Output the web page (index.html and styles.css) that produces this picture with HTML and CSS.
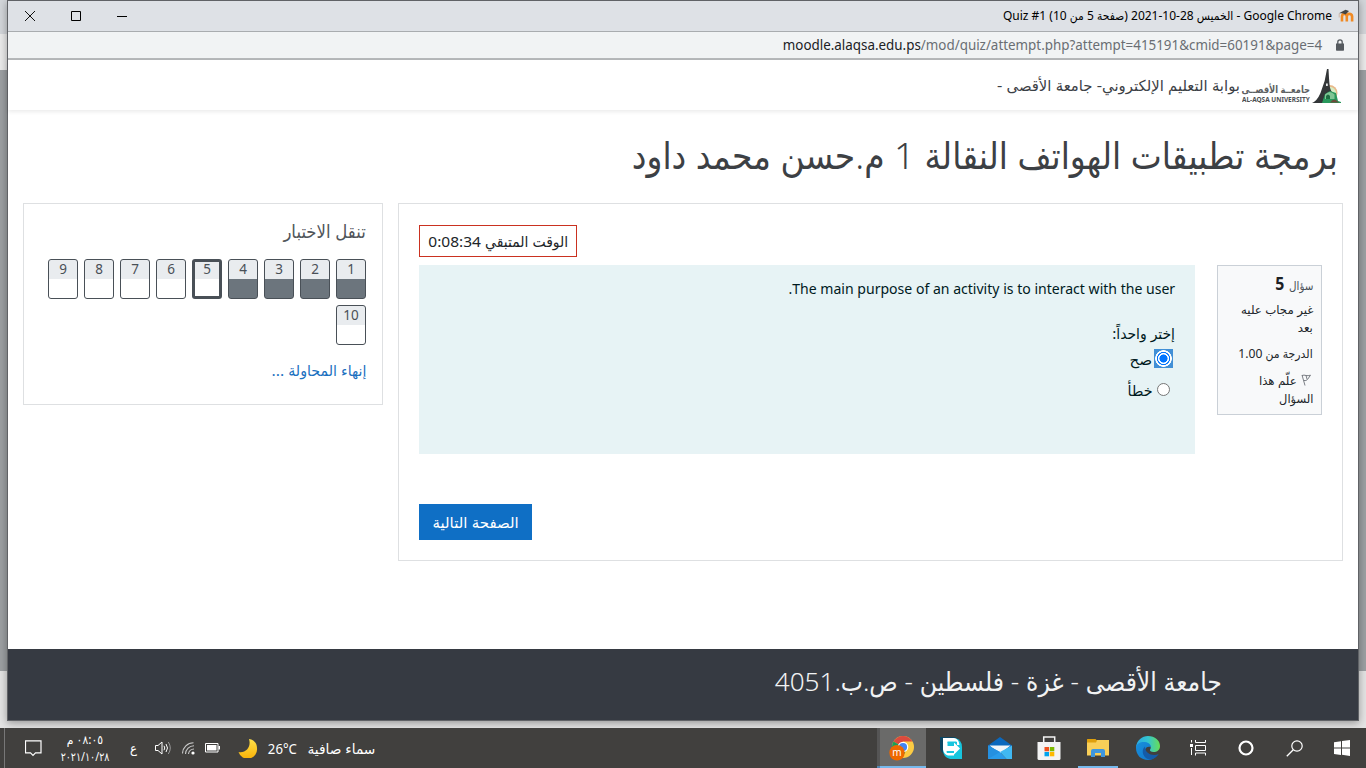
FILE: index.html
```
<!DOCTYPE html>
<html lang="ar" dir="rtl">
<head>
<meta charset="utf-8">
<title>Quiz #1</title>
<link rel="stylesheet" href="styles.css">
</head>
<body>
<div class="desktop">
  <div class="window">
    <div class="titlebar">
      <svg class="favicon" width="16" height="14" viewBox="0 0 16 14"><path d="M4 12.500V7.500q0-2.600 2.300-2.600t2.500 2.600v5M8.800 7.500q0-2.600 2.500-2.600t2.800 2.600v5" fill="none" stroke="#f08a24" stroke-width="2.600"/><path d="M1 4.200L7.500.800l3.500 1.200-3.500 3.600-3-1.300z" fill="#444"/><path d="M1.200 4.500v4" stroke="#c9a48a" stroke-width=".7"/></svg>
      <span class="t title-text" dir="ltr">Quiz #1 (<bdi dir="rtl">صفحة 5 من 10</bdi>) <bdi dir="ltr">2021-10-28</bdi> <bdi>الخميس</bdi> - Google Chrome</span>
      <div class="controls">
        <svg width="12" height="12"><path d="M1 6.500h10" stroke="#000"/></svg>
        <svg width="12" height="12"><path d="M1.500 1.500h9v9h-9z" fill="none" stroke="#000"/></svg>
        <svg width="12" height="12"><path d="M1 1l10 10M11 1L1 11" stroke="#111"/></svg>
      </div>
    </div>
    <div class="urlbar">
      <svg class="lock" width="8" height="12" viewBox="0 0 8 12"><path d="M0 4.500h8V11q0 .7-.7.7H.7Q0 11.700 0 11z" fill="#555a5f"/><path d="M1.800 5V3a2.200 2.200 0 014.400 0v2" fill="none" stroke="#555a5f" stroke-width="1.300"/></svg>
      <span class="t url" dir="ltr"><span class="host">moodle.alaqsa.edu.ps</span>/mod/quiz/attempt.php?attempt=415191&amp;cmid=60191&amp;page=4</span>
    </div>
    <header class="site-header">
      <svg class="emblem" width="29" height="35" viewBox="0 0 29 35"><circle cx="17.500" cy="24" r="8" fill="#e8b98a"/><circle cx="17.500" cy="24.500" r="6.700" fill="#d6ecc4"/><path d="M15 0h1.500q.5 10 1 15 .5 6 2.500 8-3-1-6 3-2 3-3 8H0q5-2 8.500-10Q13.500 12 15 0z" fill="#333638"/><path d="M14 14.500h1.800v2.500H14z" fill="#e4e6e7"/><path d="M10 34l3-9 5-3 6 2 2 8 3 1v1z" fill="#28985c"/><path d="M13 25.500q5-5 9.500 0V30H13z" fill="#7fc594"/><path d="M14 30v-3q2-3 4 0v3z" fill="#1f6d42"/><path d="M18 33.500q2-3 5-3l4 3z" fill="#6b4a3a"/></svg>
      <div class="logo-words"><span class="t logo-ar">جامعــة الأقصــى</span><span class="t logo-en" dir="ltr">AL-AQSA UNIVERSITY</span></div>
      <span class="t site-name">بوابة التعليم الإلكتروني- جامعة الأقصى -</span>
    </header>
    <div class="page">
      <h1 class="course"><span class="t">برمجة تطبيقات الهواتف النقالة 1 م.حسن محمد داود</span></h1>
      <div class="columns">
        <main class="card quiz">
          <div class="timer"><span class="t">الوقت المتبقي 0:08:34</span></div>
          <div class="question">
            <aside class="info">
              <div class="qno"><span class="t">سؤال</span> <b class="t">5</b></div>
              <div class="state"><span class="t w109">غير مجاب عليه</span><br><span class="t w109">بعد</span></div>
              <div class="grade"><span class="t">الدرجة من 1.00</span></div>
              <div class="flag"><svg width="10" height="12" viewBox="0 0 10 12"><path d="M1 1l3 10.500M1 1.500q2-.8 4 0 2 .5 4.500-.3L6.500 5.500Q5 7 3 6.500M5 1.500L6 5" fill="none" stroke="#6d7278" stroke-width=".9"/></svg><span class="t w109">علّم هذا</span><br><span class="t w106">السؤال</span></div>
            </aside>
            <section class="body">
              <p class="stem"><span class="t">The main purpose of an activity is to interact with the user.</span></p>
              <div class="prompt"><span class="t">إختر واحداً:</span></div>
              <label class="answer"><i class="radio on"></i><span class="t w112">صح</span></label>
              <label class="answer"><i class="radio"></i><span class="t w106">خطأ</span></label>
            </section>
          </div>
          <div class="next"><span class="t">الصفحة التالية</span></div>
        </main>
        <nav class="card side">
          <h2><span class="t">تنقل الاختبار</span></h2>
          <div class="pages">
            <a class="pg done">1</a><a class="pg done">2</a><a class="pg done">3</a><a class="pg done">4</a><a class="pg now">5</a><a class="pg">6</a><a class="pg">7</a><a class="pg">8</a><a class="pg">9</a><a class="pg">10</a>
          </div>
          <div class="finish"><span class="t">إنهاء المحاولة ...</span></div>
        </nav>
      </div>
    </div>
    <footer class="footer"><span class="t">جامعة الأقصى - غزة - فلسطين - ص.ب.4051</span></footer>
  </div>
  <div class="taskbar">
    <div class="app"><svg width="16" height="16" viewBox="0 0 16 16"><path d="M0 2.200L7 1.200v6.400H0zM8 1.100L16 0v7.600H8zM0 8.600h7v6.300l-7-1zM8 8.600h8V16l-8-1.200z" fill="#fff"/></svg></div>
    <div class="app"><svg width="17" height="17" viewBox="0 0 17 17"><circle cx="11" cy="6" r="5.200" fill="none" stroke="#fff" stroke-width="1.200"/><path d="M7.300 9.700L.8 16.200" stroke="#fff" stroke-width="1.300"/></svg></div>
    <div class="app"><svg width="16" height="16" viewBox="0 0 16 16"><circle cx="8" cy="8" r="6.500" fill="none" stroke="#fff" stroke-width="2.200"/></svg></div>
    <div class="app"><svg width="17" height="16" viewBox="0 0 17 16"><path d="M1.500 0v2.500M1.500 8v7M5.500 0v2.500h10V0M5.500 5.500h10v5h-10zM5.500 15.500V13h10v2.500" fill="none" stroke="#fff"/><path d="M0 4h3v3H0z" fill="#fff"/></svg></div>
    <div class="app edge"><svg width="24" height="24" viewBox="0 0 24 24"><defs><linearGradient id="eg" x1="0" x2="1"><stop offset="0" stop-color="#29a9e4"/><stop offset=".5" stop-color="#34c5cf"/><stop offset="1" stop-color="#68dd55"/></linearGradient><linearGradient id="eb" x2="1" y2="1"><stop offset="0" stop-color="#1890dc"/><stop offset="1" stop-color="#1275c9"/></linearGradient></defs><path d="M0 11C1 4 6 0 12 0c7 0 12 4.500 12 10 0 4-3 6-6.500 6-2.500 0-4-1-3.500-2.200 2-2.500 0-5.800-4-5.800-5 0-8 3-10 3z" fill="url(#eg)"/><path d="M0 11c1-4 5-5.500 9-5 4 .5 6 3 6 5-3-1-6 0-6 4 0 4 4 7 9 7-2 1.500-4 2-6 2-7 0-12-5-12-12z" fill="url(#eb)"/><path d="M9 10.500C4 15 8 23 14 23.700c4-.5 7-3 8.700-5.700C17 20.500 9 18 9 10.500z" fill="#145ba8"/></svg></div>
    <div class="app wide run"><svg width="22" height="20" viewBox="0 0 22 20"><path d="M0 2h22v15.500H0z" fill="#f9cf58"/><path d="M0 1.500Q0 1 .5 1h8l1.500 1.500-1 2H0z" fill="#dfa00c"/><path d="M4 19v-6q0-2 2-2h10q2 0 2 2v6h-4v-4H8v4z" fill="#3f97de"/></svg></div>
    <div class="app wide"><svg width="24" height="24" viewBox="0 0 24 24"><path d="M6.700 7V1h11v6" fill="none" stroke="#f4f4f4" stroke-width="1.500"/><path d="M.5 6h23v16.500q0 1.500-1.500 1.500H2Q.5 24 .5 22.500z" fill="#f4f4f4"/><path d="M7.500 11H12v4.300H7.500z" fill="#f0501f"/><path d="M12.800 11h4.500v4.300h-4.500z" fill="#7dba00"/><path d="M7.500 16H12v4.300H7.500z" fill="#00a3ee"/><path d="M12.800 16h4.500v4.300h-4.500z" fill="#ffb900"/></svg></div>
    <div class="app wide"><svg width="24" height="22" viewBox="0 0 24 22"><path d="M0 8.500L12 0l12 8.500v3H0z" fill="#0b68bd"/><path d="M1.500 8.500h21L12 17z" fill="#f2f5f8"/><path d="M0 8.500L12 15 18.500 22H0z" fill="#2a9bea"/><path d="M24 8.500L12 15l6.500 7H24z" fill="#40b8f2"/><path d="M0 8.500L12 15 0 22z" fill="#2590e0"/></svg></div>
    <div class="app wide"><svg width="24" height="24" viewBox="0 0 24 24"><path d="M1 1h15l4 4v14H7q-6-2-6-8z" fill="#0d4561"/><path d="M4 2h12q7 2 7 9v12H11q-7-2-7-9z" fill="#17c5de"/><path d="M4 2h11q5 1 5.500 7H18V6H8.500v4H4z" fill="#fff"/><path d="M8 10h7V6.500l6 6-6 6V15H8v2h7v2.500H9q-4-1-5-6V10h4z" fill="#fff"/><path d="M8.500 5.500h9v1.300h-9zM7.500 15.300h7v1.300h-7z" fill="#17c5de"/></svg></div>
    <div class="app wide active"><svg width="26" height="28" viewBox="0 0 26 28"><circle cx="14" cy="13" r="11" fill="#fccb43"/><path d="M14 13L4.500 7.500A11 11 0 0123.500 7.500H14z" fill="#db4a3e"/><path d="M14 13L4.500 7.500A11 11 0 0013 24l5-9z" fill="#199e5a"/><circle cx="14" cy="13" r="5.300" fill="#fff"/><circle cx="14" cy="13" r="4.100" fill="#4285f4"/><circle cx="8" cy="18.700" r="7.700" fill="#ee6800"/><text x="8" y="21.700" text-anchor="middle" class="badge">m</text></svg></div>
    <div class="stack"></div>
    <div class="weather"><span class="t w109">سماء صافية</span><span class="t temp" dir="ltr">26°C</span>
      <svg width="20" height="19" viewBox="0 0 20 19"><defs><linearGradient id="mo" x2="0" y2="1"><stop offset="0" stop-color="#ffe14a"/><stop offset="1" stop-color="#f9b208"/></linearGradient></defs><path d="M11 0c5 .5 8 4.500 8 9a9.500 9.500 0 01-18.500 4C8 14.500 13.500 8 11 0z" fill="url(#mo)"/></svg></div>
    <div class="tray">
      <svg width="15" height="10" viewBox="0 0 15 10"><path d="M.5.5h12.500v8.500H.5z" fill="none" stroke="#fff"/><path d="M2 2h9.500v5.500H2zM13.500 3H15v3.500h-1.500z" fill="#fff"/></svg>
      <svg width="13" height="13" viewBox="0 0 13 13"><path d="M.5 11.500A11 11 0 0111.500.8M3.500 12A8.500 8.500 0 0112 3.800M6.500 12A5.500 5.500 0 0112 7" fill="none" stroke="#c9c9c9" stroke-width="1.100"/><circle cx="11" cy="11" r="1.600" fill="#fff"/></svg>
      <svg width="17" height="14" viewBox="0 0 17 14"><path d="M.5 4.500H3l4-3.500v12L3 9.500H.5z" fill="none" stroke="#fff"/><path d="M9 4.800q1.500 2.200 0 4.400M11 3q3 4 0 8" fill="none" stroke="#fff"/><path d="M13.300 1q4 6 0 12" fill="none" stroke="#999"/></svg>
      <span class="t lang">ع</span>
    </div>
    <div class="clock"><span class="t">٠٨:٠٥ م</span><span class="t date">٢٠٢١/١٠/٢٨</span></div>
    <svg class="notify" width="17" height="17" viewBox="0 0 17 17"><path d="M.5.800h15.500v12H10.500L8 15.300 5.500 12.800h-5z" fill="none" stroke="#fff" stroke-width="1.200"/></svg>
    <div class="edge-line"></div>
  </div>
</div>
</body>
</html>
```
FILE: styles.css
```
* { box-sizing: border-box; }
body { margin: 0; font-family: "Noto Sans", "DejaVu Sans Condensed", sans-serif; color: #212529; overflow: hidden; }
svg { display: block; flex: none; }
.t { display: inline-block; white-space: nowrap; transform-origin: right center; }
.w106 { transform: scaleX(1.06); }
.w109 { transform: scaleX(1.09); }
.w112 { transform: scaleX(1.12); }

.desktop { width: 1366px; height: 768px; display: flex; flex-direction: column; background: linear-gradient(#d3d6da 0 34px, #ebebeb 34px 70px, #9da0a3 70px 671px, #e4e4e4 671px); }
.window { width: 1352px; height: 721px; margin-right: 7px; margin-bottom: 7px; border: 1px solid #606266; background: #fff; display: flex; flex-direction: column; box-shadow: 0 2px 8px rgba(0,0,0,.35); flex: none; }

.titlebar { height: 31px; background: #dee1e6; border-bottom: 1px solid #a9acaf; display: flex; align-items: center; padding: 0 4px 0 16px; }
.favicon { margin-left: 6px; }
.title-text { font-size: 12px; color: #000; line-height: 28px; }
.controls { display: flex; gap: 34px; margin-right: auto; margin-bottom: 1px; }
.urlbar { height: 28px; background: #f1f3f4; border-bottom: 2px solid #b5b7b9; display: flex; align-items: center; padding-right: 14px; }
.lock { margin-left: 14px; }
.url { font-size: 14px; line-height: 26px; color: #6a6e73; transform: scaleX(.956); }
.host { color: #202124; }

.site-header { height: 50px; display: flex; align-items: flex-start; padding: 9px 17px 0 0; box-shadow: 0 2px 4px rgba(0,0,0,.08); }
.logo-words { width: 67px; margin: 15px 2px 0 0; display: flex; flex-direction: column; color: #5c5f62; }
.logo-ar { font-size: 10px; line-height: 11px; font-weight: 700; transform: scaleX(.92); }
.logo-en { font-size: 7.500px; line-height: 8px; font-weight: 700; transform: scaleX(.86); align-self: flex-start; color: #4c4f52; }
.site-name { font-size: 15px; line-height: 24px; margin: 4px 3px 0 0; color: #3b4045; transform: scaleX(1.1); }

.page { height: 539px; padding: 16px 15px 0; }
.course { margin: 0; padding: 0 5px 0 0; height: 77px; font-size: 37px; line-height: 57px; font-weight: 300; }
.course .t { transform: scaleX(.989); color: #3c4044; }
.columns { display: flex; gap: 15px; align-items: flex-start; }
.card { border: 1px solid #dee0e2; }
.quiz { width: 945px; height: 358px; padding: 21px 20px 0; }
.timer { width: 158px; height: 32px; margin-right: auto; border: 1px solid #ca3120; padding-right: 8px; font-size: 15px; line-height: 30px; }
.timer .t { transform: scaleX(1.035); }
.question { display: flex; gap: 22px; margin-top: 8px; align-items: flex-start; }
.info { width: 105px; height: 150px; border: 1px solid #cad0d7; background: #f8f9fa; padding: 7px 8px 0; font-size: 12px; line-height: 18px; }
.qno { height: 28px; line-height: 20px; color: #495057; }
.qno b { font-size: 18px; color: #1d2125; transform: scaleX(.88); }
.qno .t:first-child { transform: scaleX(.96); }
.state { height: 44px; }
.grade { height: 27px; }
.grade .t { transform: scaleX(1.01); }
.flag svg { display: inline-block; margin: 0 2px 0 4px; vertical-align: -1px; }
.body { width: 776px; height: 189px; background: #e7f3f5; padding: 12px 20px 0 0; color: #001a1e; font-size: 15px; }
.stem { margin: 0; font-size: 14px; line-height: 23px; }
.stem .t { transform: scaleX(1.004); }
.prompt { margin-top: 21px; line-height: 24px; height: 25px; }
.prompt .t { transform: scaleX(1.03); }
.answer { display: flex; align-items: center; height: 25px; margin-right: 2px; }
.answer + .answer { margin-top: 6px; }
.radio { width: 13px; height: 13px; border: 1px solid #767676; border-radius: 50%; background: #fff; margin: 0 3px 0 4px; }
.radio.on { width: 19px; height: 19px; border: 0; border-radius: 0; margin: 0 0 0 2px; background: radial-gradient(circle, #0075ff 0 3.800px, #fff 4.300px 5.300px, #0075ff 5.700px 6.300px, #fff 6.800px 8px, #418fd6 8.600px); }
.radio.on { outline: 1px solid #418fd6; outline-offset: -1px; }
.next { width: 113px; height: 36px; margin: 50px auto 0 0; background: #0f6fc5; color: #fff; font-size: 15px; line-height: 37px; padding-right: 13px; }
.next .t { transform: scaleX(1.11); }

.side { width: 360px; height: 202px; padding: 14px 16px 0 0; }
.side h2 { margin: 0; font-size: 18px; font-weight: 300; line-height: 27px; color: #50555a; height: 41px; }
.side h2 .t { transform: scaleX(1.02); }
.pages { display: flex; flex-wrap: wrap; gap: 6px; width: 320px; }
.pg { width: 30px; height: 40px; border: 1px solid #495057; border-radius: 3px; background: linear-gradient(#e9ecef 19px, #fff 19px); text-align: center; font-size: 13.500px; line-height: 18px; color: #495057; }
.pg.done { background: linear-gradient(#e9ecef 19px, #6c757d 19px); }
.pg.now { border-width: 3px; background: linear-gradient(#e9ecef 17px, #fff 17px); line-height: 14px; }
.finish { font-size: 15px; line-height: 24px; margin-top: 13px; color: #1b70c0; }
.finish .t { transform: scaleX(1.05); }
.footer { flex: 1; background: #363a42; color: #f1f2f3; padding-right: 136px; font-size: 26px; font-weight: 300; line-height: 65px; }
.footer .t { transform: scaleX(1.005); }

.taskbar { height: 40px; background: #41403e; display: flex; align-items: stretch; color: #fff; }
.app { width: 48px; display: flex; align-items: center; justify-content: center; }
.app.edge { width: 52px; padding-right: 1px; }
.app.wide { width: 49px; }
.run { background: linear-gradient(#76b9ed, #76b9ed) center bottom / 40px 2px no-repeat; }
.app.active { width: 46px; padding-right: 3px; background: linear-gradient(#76b9ed, #76b9ed) bottom / 100% 2px no-repeat #6a6a69; }
.stack { width: 3px; background: #555; border-bottom: 2px solid #5086b2; }
.badge { font: 10px "Noto Sans", sans-serif; fill: #fff; }
.weather { margin-right: 502px; width: 136px; display: flex; align-items: center; font-size: 14px; padding-top: 1px; }
.temp { transform: scaleX(.94); margin-right: 16px; }
.weather svg { margin-right: 8px; }
.tray { width: 90px; margin-right: 19px; display: flex; align-items: center; }
.tray svg:nth-child(2) { margin-right: 10px; }
.tray svg:nth-child(3) { margin-right: 10px; }
.lang { font-size: 13px; margin-right: 18px; }
.clock { width: 48px; margin-right: 21px; display: flex; flex-direction: column; align-items: flex-start; font-size: 12px; padding-top: 3px; }
.clock .t { line-height: 17px; margin-right: 6px; }
.clock .date { transform: scaleX(.88); margin-right: 0; }
.notify { margin: 12px 19px 0 0; }
.edge-line { width: 1px; margin-right: auto; margin-left: 4px; background: #777; }
```
